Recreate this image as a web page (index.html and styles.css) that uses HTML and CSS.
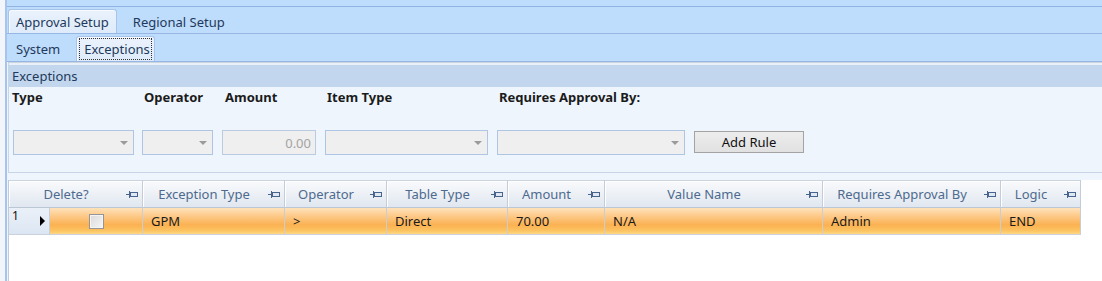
FILE: index.html
```html
<!DOCTYPE html>
<html lang="en">
<head>
  <meta charset="UTF-8" />
  <title>Approval Setup - Exceptions</title>
  <link rel="stylesheet" href="styles.css">
</head>
<body>

<div class="app">
  <div class="edge"></div>
  <div class="main">
    <div class="topband"></div>

    <div class="tabbar tabbar-top">
      <div class="tab active">Approval Setup</div>
      <div class="tab">Regional Setup</div>
    </div>

    <div class="tabbar tabbar-sub">
      <div class="tab">System</div>
      <div class="tab active tab-focus"><span class="focus">Exceptions</span></div>
    </div>

    <div class="group">
      <div class="group-title">Exceptions</div>
      <div class="group-body">
        <div class="fields">
          <div class="field f-type">
            <label>Type</label>
            <div class="combo"><span class="arrow"></span></div>
          </div>
          <div class="field f-op">
            <label>Operator</label>
            <div class="combo"><span class="arrow"></span></div>
          </div>
          <div class="field f-amount">
            <label>Amount</label>
            <div class="combo amount">0.00</div>
          </div>
          <div class="field f-item">
            <label>Item Type</label>
            <div class="combo"><span class="arrow"></span></div>
          </div>
          <div class="field f-req">
            <label>Requires Approval By:</label>
            <div class="combo"><span class="arrow"></span></div>
          </div>
          <button class="btn">Add Rule</button>
        </div>
      </div>
    </div>

    <div class="grid-wrap">
      <div class="grid">
        <!-- encabezados -->
        <div class="hcell span2"><span>Delete?</span><svg class="pin" width="13" height="9" viewBox="0 0 13 9"><path d="M0 4.5h3.5M3.5 1v7" stroke="#46648c"/><rect x="4.5" y="2.5" width="7" height="4" fill="#dfe7f2" stroke="#46648c"/></svg></div>
        <div class="hcell"><span>Exception Type</span><svg class="pin" width="13" height="9" viewBox="0 0 13 9"><path d="M0 4.5h3.5M3.5 1v7" stroke="#46648c"/><rect x="4.5" y="2.5" width="7" height="4" fill="#dfe7f2" stroke="#46648c"/></svg></div>
        <div class="hcell"><span>Operator</span><svg class="pin" width="13" height="9" viewBox="0 0 13 9"><path d="M0 4.5h3.5M3.5 1v7" stroke="#46648c"/><rect x="4.5" y="2.5" width="7" height="4" fill="#dfe7f2" stroke="#46648c"/></svg></div>
        <div class="hcell"><span>Table Type</span><svg class="pin" width="13" height="9" viewBox="0 0 13 9"><path d="M0 4.5h3.5M3.5 1v7" stroke="#46648c"/><rect x="4.5" y="2.5" width="7" height="4" fill="#dfe7f2" stroke="#46648c"/></svg></div>
        <div class="hcell"><span>Amount</span><svg class="pin" width="13" height="9" viewBox="0 0 13 9"><path d="M0 4.5h3.5M3.5 1v7" stroke="#46648c"/><rect x="4.5" y="2.5" width="7" height="4" fill="#dfe7f2" stroke="#46648c"/></svg></div>
        <div class="hcell"><span>Value Name</span><svg class="pin" width="13" height="9" viewBox="0 0 13 9"><path d="M0 4.5h3.5M3.5 1v7" stroke="#46648c"/><rect x="4.5" y="2.5" width="7" height="4" fill="#dfe7f2" stroke="#46648c"/></svg></div>
        <div class="hcell"><span>Requires Approval By</span><svg class="pin" width="13" height="9" viewBox="0 0 13 9"><path d="M0 4.5h3.5M3.5 1v7" stroke="#46648c"/><rect x="4.5" y="2.5" width="7" height="4" fill="#dfe7f2" stroke="#46648c"/></svg></div>
        <div class="hcell"><span>Logic</span><svg class="pin" width="13" height="9" viewBox="0 0 13 9"><path d="M0 4.5h3.5M3.5 1v7" stroke="#46648c"/><rect x="4.5" y="2.5" width="7" height="4" fill="#dfe7f2" stroke="#46648c"/></svg></div>

        <!-- fila 1 -->
        <div class="rowhead"><span class="rownum">1</span><span class="current"></span></div>
        <div class="cell check"><span class="checkbox"></span></div>
        <div class="cell">GPM</div>
        <div class="cell">&gt;</div>
        <div class="cell">Direct</div>
        <div class="cell">70.00</div>
        <div class="cell">N/A</div>
        <div class="cell">Admin</div>
        <div class="cell">END</div>
      </div>
    </div>
  </div>
</div>

</body>
</html>
```

FILE: styles.css
```css
body {
  margin: 0;
  font-family: "Noto Sans", "Open Sans", sans-serif;
  font-size: 13px;
  color: #1e395b;
  background: #fff;
}

.app {
  display: flex;
  height: 281px;
  overflow: hidden;
}

.edge {
  width: 5px;
  background: #f2f6fb;
  border-right: 2px solid #a6c4ec;
}

.main {
  flex: 1;
  display: flex;
  flex-direction: column;
  background: #eef5fd;
  min-width: 0;
}

.topband {
  height: 6px;
  background: #bedcfc;
  border-bottom: 1px solid #93b3e2;
}

/* pestañas */
.tabbar {
  display: flex;
  align-items: flex-end;
  gap: 8px;
  padding-left: 1px;
  background: #bedcfc;
  border-bottom: 1px solid #97b6e4;
}

.tabbar-top { height: 26px; }
.tabbar-sub { height: 27px; }

.tab {
  box-sizing: border-box;
  height: 24px;
  display: flex;
  align-items: center;
  padding: 0 7px;
  border: 1px solid transparent;
  border-bottom: 0;
}

.tabbar-sub .tab { height: 25px; }

.tab.active {
  background: linear-gradient(#eaf2fc, #deebfa);
  border-color: #a7c4ea;
  border-radius: 3px 3px 0 0;
  box-shadow: inset 1px 1px 0 #f7faff;
}

.tab-focus {
  padding: 0 2px;
}

.focus {
  padding: 1px 1px 1px 4px;
  border: 1px dotted #333;
}

/* grupo de excepciones */
.group {
  margin-left: 1px;
  border-left: 1px solid #c9d6e6;
  border-top: 1px solid #cbd5e0;
  padding-top: 2px;
  background: #eaf0f7;
}

.group-title {
  height: 22px;
  line-height: 22px;
  padding-left: 3px;
  background: #c2d7ee;
}

.group-body {
  padding: 2px 0 17px 4px;
  background: #eef5fd;
  border-bottom: 1px solid #c6d4e6;
}

.fields {
  display: flex;
  align-items: flex-end;
  gap: 9px;
}

.field {
  display: flex;
  flex-direction: column;
}

.field label {
  font-weight: bold;
  color: #1b1b1b;
  line-height: 16px;
  margin-bottom: 25px;
  padding-left: 2px;
  white-space: nowrap;
}

.f-type { margin-right: -1px; }
.f-type label { padding-left: 0; margin-left: -1px; }
.f-amount label { padding-left: 3px; }

.combo {
  box-sizing: border-box;
  height: 25px;
  border: 1px solid #aec6e4;
  background: #efefef;
  display: flex;
  align-items: center;
  justify-content: flex-end;
  padding-right: 5px;
}

.f-type .combo { width: 121px; }
.f-op .combo { width: 71px; }
.f-amount .combo { width: 94px; }
.f-item .combo { width: 163px; }
.f-req .combo { width: 188px; }

.arrow {
  width: 0;
  height: 0;
  border-left: 4px solid transparent;
  border-right: 4px solid transparent;
  border-top: 4px solid #9b9b9b;
}

.combo.amount {
  border-color: #b9cbe0;
  color: #a3a3a3;
  padding-right: 4px;
}

.btn {
  box-sizing: border-box;
  width: 110px;
  height: 22px;
  margin-bottom: 2px;
  border: 1px solid #a3a3a3;
  background: linear-gradient(#ededed, #e1e1e1);
  font: inherit;
  color: #111;
  padding: 0;
}

/* rejilla */
.grid-wrap {
  flex: 1;
  margin: 7px 0 0 1px;
  border-left: 1px solid #c2ccd8;
  background: #fff;
}

.grid {
  display: grid;
  grid-template-columns: 41px 93px 142px 102px 121px 97px 218px 178px 80px;
  width: max-content;
}

.hcell {
  box-sizing: border-box;
  height: 28px;
  display: flex;
  align-items: center;
  border-top: 1px solid #cbd3de;
  border-right: 1px solid #c3ccd8;
  border-bottom: 1px solid #bcc7d5;
  background: linear-gradient(#f9fafc, #e0e7f0);
  box-shadow: inset 1px 1px 0 #fff;
  color: #4d6a8f;
  white-space: nowrap;
}

.hcell span {
  flex: 1;
  text-align: center;
}

.hcell .pin {
  margin: 0 3px 0 3px;
  flex: none;
}

.span2 { grid-column: span 2; }

.rowhead {
  box-sizing: border-box;
  height: 27px;
  display: flex;
  justify-content: space-between;
  padding: 0 4px 0 3px;
  border-right: 1px solid #c5cfdc;
  border-bottom: 1px solid #c9d1dc;
  background: linear-gradient(#eaf0f8, #dce6f3);
  color: #111;
}

.rownum {
  font-size: 12px;
  line-height: 15px;
}

.current {
  align-self: center;
  width: 0;
  height: 0;
  border-top: 5px solid transparent;
  border-bottom: 5px solid transparent;
  border-left: 5px solid #000;
}

.cell {
  box-sizing: border-box;
  height: 27px;
  display: flex;
  align-items: center;
  padding-left: 8px;
  border-right: 1px solid #c9cdd4;
  border-bottom: 1px solid #cdd2da;
  background: linear-gradient(#fee2bb 0%, #fdca8a 30%, #fbb152 65%, #fcc462 88%, #fdd886 100%);
  color: #1a1a1a;
  white-space: nowrap;
}

.cell.check {
  justify-content: center;
  padding-left: 0;
}

.checkbox {
  box-sizing: border-box;
  width: 15px;
  height: 15px;
  border: 1px solid #959595;
  background: linear-gradient(135deg, #d9d9d9, #f6f6f6);
  box-shadow: inset 0 0 0 1px #f4f4f4;
}
```
